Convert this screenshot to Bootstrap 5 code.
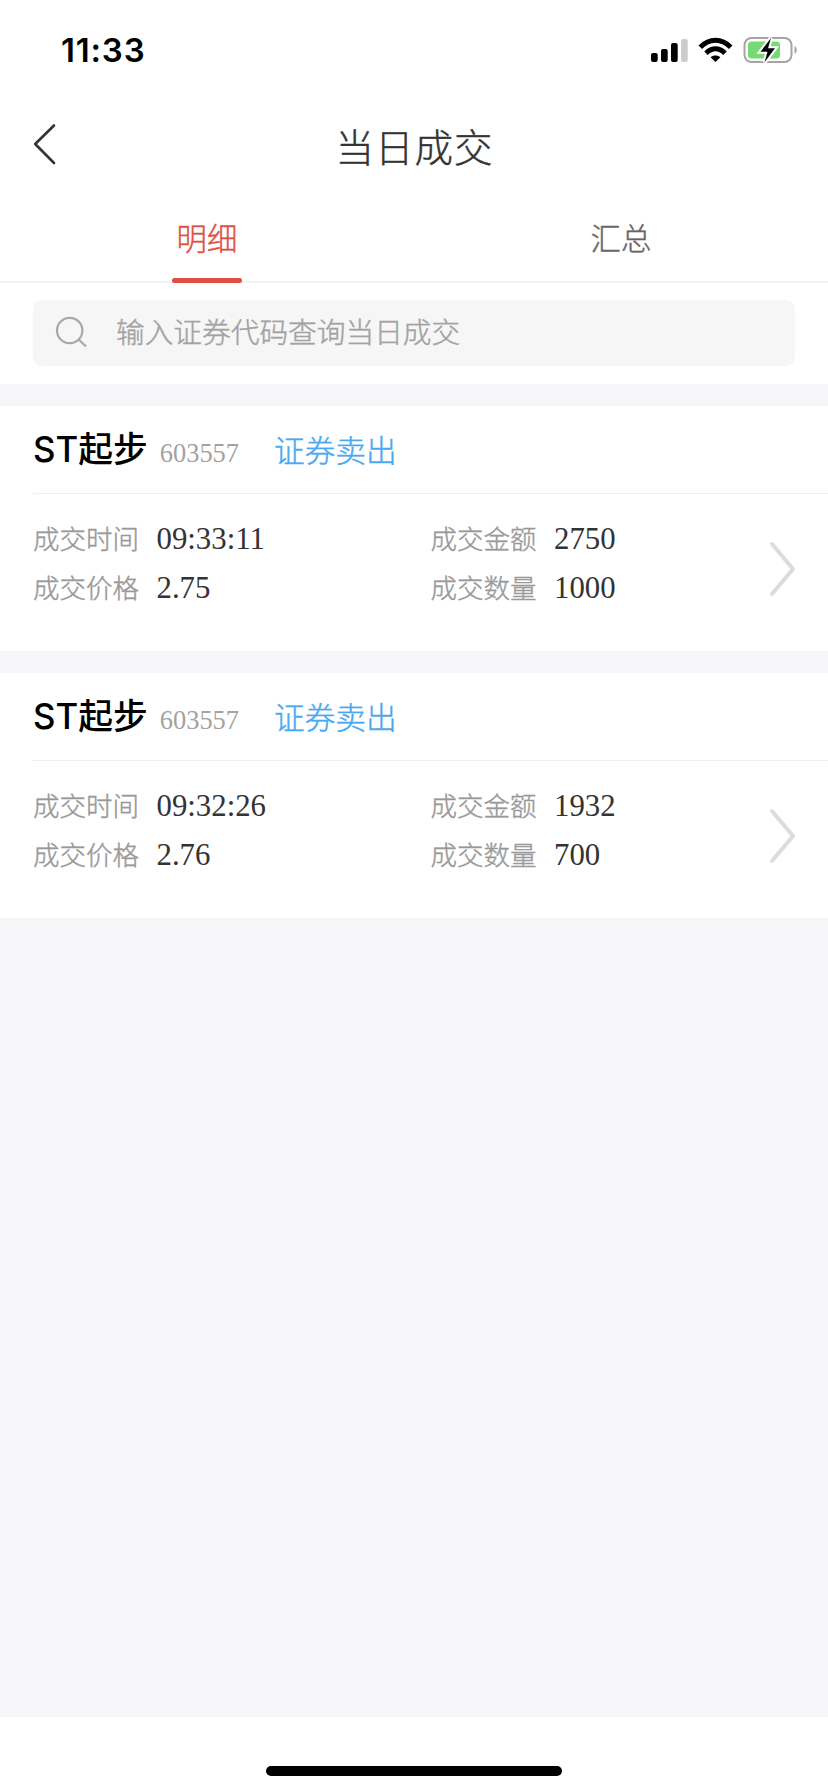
<!DOCTYPE html>
<html lang="zh-CN">
<head>
<meta charset="utf-8">
<meta name="viewport" content="width=device-width, initial-scale=1">
<title>当日成交</title>
<link href="https://cdn.jsdelivr.net/npm/bootstrap@5.3.0/dist/css/bootstrap.min.css" rel="stylesheet">
<style>
  body { font-family: "Noto Sans CJK SC", "Liberation Sans", sans-serif; font-weight: 300; color: #333; background: #f6f6f8; }
  svg { display: block; flex: none; }
  .app { height: 1792px; overflow: hidden; }
  .status-bar { height: 88px; padding: 12px 31px 0 61px; }
  .clock { font: 600 33px/40px Inter, sans-serif; letter-spacing: .8px; color: #000; }
  .title-bar { height: 100px; padding: 0 33px; }
  .title-bar h1 { font-size: 38.5px; line-height: 50px; letter-spacing: 1px; font-weight: 300; padding: 32px 0 0 1px; }
  .title-bar h1, .nav-link, .search-box span, .side-name, .item dt { -webkit-text-stroke: .4px currentColor; }
  .title-bar .side { width: 60px; }
  .tabs { height: 95px; border-bottom: 2px solid #f3f3f4; }
  .tabs .nav-link { font-size: 30.4px; line-height: 40px; color: #666; padding: 29px 0 0; border-radius: 0; }
  .tabs .nav-link.active { color: #de4f45; }
  .tab-line { width: 70px; height: 5px; border-radius: 3px; background: #de4f45; margin: 21px auto 0; }
  .search-area { height: 101px; padding: 17px 33px 0; }
  .search-box { height: 66px; border-radius: 9px; background: #f6f6f6; padding-left: 22px; }
  .search-box span { font-size: 28.7px; line-height: 40px; color: #a2a2a2; margin-bottom: 5px; margin-left: 28px; }
  .deal { height: 245px; margin-top: 22px; }
  .deal-head { height: 88px; margin-left: 33px; border-bottom: 1.5px solid #efefef; padding-top: 18px; line-height: 50px; }
  .stock { font-family: Inter, "Noto Sans CJK SC", sans-serif; font-size: 34.8px; font-weight: 500; color: #000; }
  .code { font-family: "Liberation Serif", serif; font-size: 26.4px; font-weight: 400; color: #a2a2a2; margin-left: 12px; }
  .side-name { font-size: 30.7px; color: #4aa8f2; margin-left: 35px; }
  .deal-body { padding: 20px 32px 0 33px; }
  .deal-col { width: 397.5px; }
  .item { height: 48.5px; line-height: 48.5px; }
  .item dt { font-size: 26.5px; font-weight: 300; color: #999; width: 123.5px; }
  .item dd { font-family: "Liberation Serif", serif; font-size: 30.8px; font-weight: 400; color: #333; margin: 0; }
  .go { margin-top: 27px; }
  .home-area { height: 75px; }
  .home-line { width: 296px; height: 10px; border-radius: 5px; background: #000; margin-bottom: 16px; }
</style>
</head>
<body>
<div class="app d-flex flex-column">
  <div class="status-bar bg-white d-flex justify-content-between align-items-center">
    <span class="clock">11:33</span>
    <svg width="150" height="30" viewBox="646 35 150 30" role="img" aria-label="信号、无线网络、电量">
      <g fill="#000">
        <rect x="650" y="53" width="6.7" height="9" rx="2"/>
        <rect x="660" y="49" width="6.7" height="13" rx="2"/>
        <rect x="670" y="43" width="6.7" height="19" rx="2"/>
        <rect x="680" y="39" width="6.7" height="23" rx="2" fill="#ccc"/>
      </g>
      <g fill="none" stroke="#000" stroke-width="5">
        <path d="M699.3 47.2C708.5 38 720.5 38 729.7 47.2"/>
        <path d="M705 53.2C711 47.4 718 47.4 724 53.2"/>
      </g>
      <path d="M714.5 62L709.6 57.2C712.3 54.8 716.7 54.8 719.4 57.2Z"/>
      <rect x="743.5" y="38" width="47" height="24" rx="7" fill="#fff" stroke="#a5a5a5" stroke-width="2"/>
      <rect x="747" y="41.5" width="32" height="17" rx="3.5" fill="#76db74"/>
      <path d="M793.5 46C796.5 47.5 796.5 52.5 793.5 54Z" fill="#a5a5a5"/>
      <path d="M770 38L759.5 51.8H766.5L763.5 62.3L774 48.3H767Z" fill="#000" stroke="#fff" stroke-width="4" paint-order="stroke"/>
    </svg>
  </div>

  <header class="title-bar bg-white d-flex justify-content-between align-items-start">
    <div class="side">
      <svg width="24" height="112" viewBox="33 88 24 112" role="img" aria-label="返回"><path d="M54 125.5L35.2 144L54 163" fill="none" stroke="#333" stroke-width="2.6" stroke-linecap="round" stroke-linejoin="round"/></svg>
    </div>
    <h1 class="m-0">当日成交</h1>
    <div class="side"></div>
  </header>

  <nav class="tabs nav nav-fill bg-white flex-nowrap">
    <div class="nav-item w-50"><a class="nav-link active">明细</a><div class="tab-line"></div></div>
    <div class="nav-item w-50"><a class="nav-link">汇总</a></div>
  </nav>

  <div class="search-area bg-white">
    <div class="search-box d-flex align-items-center">
      <svg width="33" height="34" viewBox="55 315.5 33 34"><circle cx="69.7" cy="330" r="12.7" fill="none" stroke="#a8a8a8" stroke-width="2.2"/><path d="M78.7 339L86 346" stroke="#a8a8a8" stroke-width="2.2"/></svg>
      <span>输入证券代码查询当日成交</span>
    </div>
  </div>

  <main class="flex-grow-1">
    <section class="deal bg-white">
      <div class="deal-head d-flex align-items-baseline"><span class="stock">ST起步</span><span class="code">603557</span><span class="side-name">证券卖出</span></div>
      <div class="deal-body d-flex">
        <dl class="deal-col m-0">
          <div class="item d-flex align-items-baseline"><dt>成交时间</dt><dd>09:33:11</dd></div>
          <div class="item d-flex align-items-baseline"><dt>成交价格</dt><dd>2.75</dd></div>
        </dl>
        <dl class="m-0">
          <div class="item d-flex align-items-baseline"><dt>成交金额</dt><dd>2750</dd></div>
          <div class="item d-flex align-items-baseline"><dt>成交数量</dt><dd>1000</dd></div>
        </dl>
        <svg class="go ms-auto" width="27" height="56" viewBox="0 0 27 56"><path d="M3 3L24 28L3 53" fill="none" stroke="#dcdcdc" stroke-width="4" stroke-linecap="round" stroke-linejoin="round"/></svg>
      </div>
    </section>
    <section class="deal bg-white">
      <div class="deal-head d-flex align-items-baseline"><span class="stock">ST起步</span><span class="code">603557</span><span class="side-name">证券卖出</span></div>
      <div class="deal-body d-flex">
        <dl class="deal-col m-0">
          <div class="item d-flex align-items-baseline"><dt>成交时间</dt><dd>09:32:26</dd></div>
          <div class="item d-flex align-items-baseline"><dt>成交价格</dt><dd>2.76</dd></div>
        </dl>
        <dl class="m-0">
          <div class="item d-flex align-items-baseline"><dt>成交金额</dt><dd>1932</dd></div>
          <div class="item d-flex align-items-baseline"><dt>成交数量</dt><dd>700</dd></div>
        </dl>
        <svg class="go ms-auto" width="27" height="56" viewBox="0 0 27 56"><path d="M3 3L24 28L3 53" fill="none" stroke="#dcdcdc" stroke-width="4" stroke-linecap="round" stroke-linejoin="round"/></svg>
      </div>
    </section>
  </main>

  <footer class="home-area bg-white d-flex justify-content-center align-items-end"><div class="home-line"></div></footer>
</div>
<script src="https://cdn.jsdelivr.net/npm/bootstrap@5.3.0/dist/js/bootstrap.bundle.min.js"></script>
</body>
</html>
